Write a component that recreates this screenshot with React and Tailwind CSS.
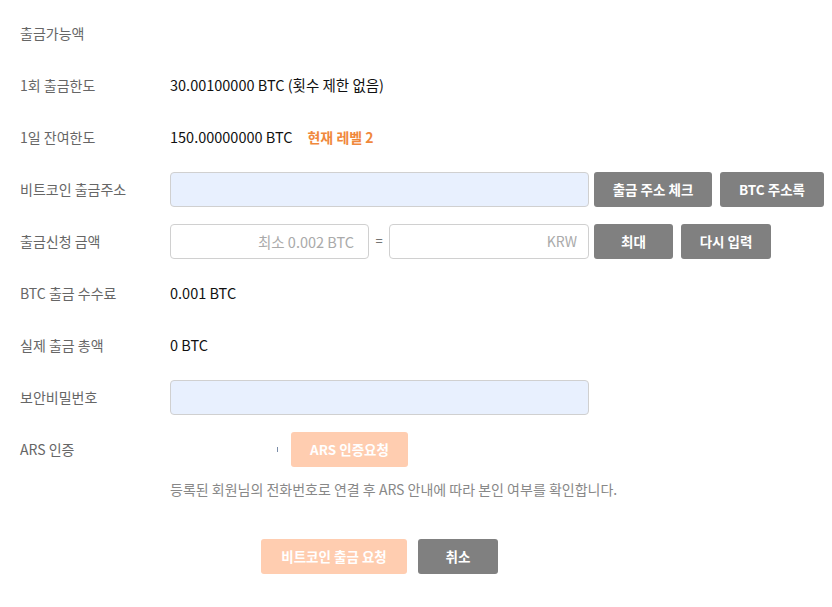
import React from "react";

const font = { fontFamily: '"Noto Sans CJK KR", "Noto Sans", sans-serif' };

function Row({ label, children, className = "" }) {
	return (
		<div className={`flex items-center h-[52px] ${className}`}>
			<div className="w-[150px] shrink-0 text-[14px] text-[#666]">{label}</div>
			<div className="flex items-center text-[14.5px] text-[#111]">{children}</div>
		</div>
	);
}

function GrayButton({ children, className = "" }) {
	return <button className={`h-[35px] rounded-[3px] bg-[#808080] text-white text-[13.5px] font-bold ${className}`}>{children}</button>;
}

export default function App() {
	return (
		<div className="w-[832px] h-[607px] bg-white pl-5 pt-[7px]" style={font}>
			<Row label="출금가능액" />
			<Row label="1회 출금한도">30.00100000 BTC (횟수 제한 없음)</Row>
			<Row label="1일 잔여한도">
				150.00000000 BTC
				<span className="ml-[15px] text-[#f0883c] font-bold text-[14px]">현재 레벨 2</span>
			</Row>
			<Row label="비트코인 출금주소">
				<input className="w-[419px] h-[35px] rounded-[4px] border border-[#d0d0d0] bg-[#e8f0fe] outline-none" />
				<GrayButton className="ml-[5px] w-[118px]">출금 주소 체크</GrayButton>
				<GrayButton className="ml-2 w-[104px]">BTC 주소록</GrayButton>
			</Row>
			<Row label="출금신청 금액">
				<input placeholder="최소 0.002 BTC" className="w-[199px] h-[35px] rounded-[4px] border border-[#d0d0d0] bg-white text-right pr-[14px] text-[14.5px] placeholder:text-[#aaa] outline-none" />
				<span className="w-[20px] text-center text-[13px] text-[#555]">=</span>
				<input placeholder="KRW" className="w-[200px] h-[35px] rounded-[4px] border border-[#d0d0d0] bg-white text-right pr-[11px] text-[14px] placeholder:text-[#aaa] outline-none" />
				<GrayButton className="ml-[5px] w-[79px]">최대</GrayButton>
				<GrayButton className="ml-2 w-[90px]">다시 입력</GrayButton>
			</Row>
			<Row label="BTC 출금 수수료">0.001 BTC</Row>
			<Row label="실제 출금 총액">0 BTC</Row>
			<Row label="보안비밀번호">
				<input type="password" className="w-[419px] h-[35px] rounded-[4px] border border-[#d0d0d0] bg-[#e8f0fe] outline-none" />
			</Row>
			<Row label="ARS 인증">
				<span className="ml-[107px] w-px h-[5px] bg-[#7a8ca8]" />
				<button className="ml-[13px] w-[117px] h-[35px] rounded-[3px] bg-[#ffcdb0] text-white text-[13.5px] font-bold">ARS 인증요청</button>
			</Row>
			<p className="ml-[150px] mt-1 text-[14px] text-[#888]">등록된 회원님의 전화번호로 연결 후 ARS 안내에 따라 본인 여부를 확인합니다.</p>
			<div className="flex gap-[11px] mt-[39px] ml-[241px]">
				<button className="w-[146px] h-[35px] rounded-[3px] bg-[#ffcdb0] text-white text-[13.5px] font-bold">비트코인 출금 요청</button>
				<GrayButton className="w-[80px]">취소</GrayButton>
			</div>
		</div>
	);
}
